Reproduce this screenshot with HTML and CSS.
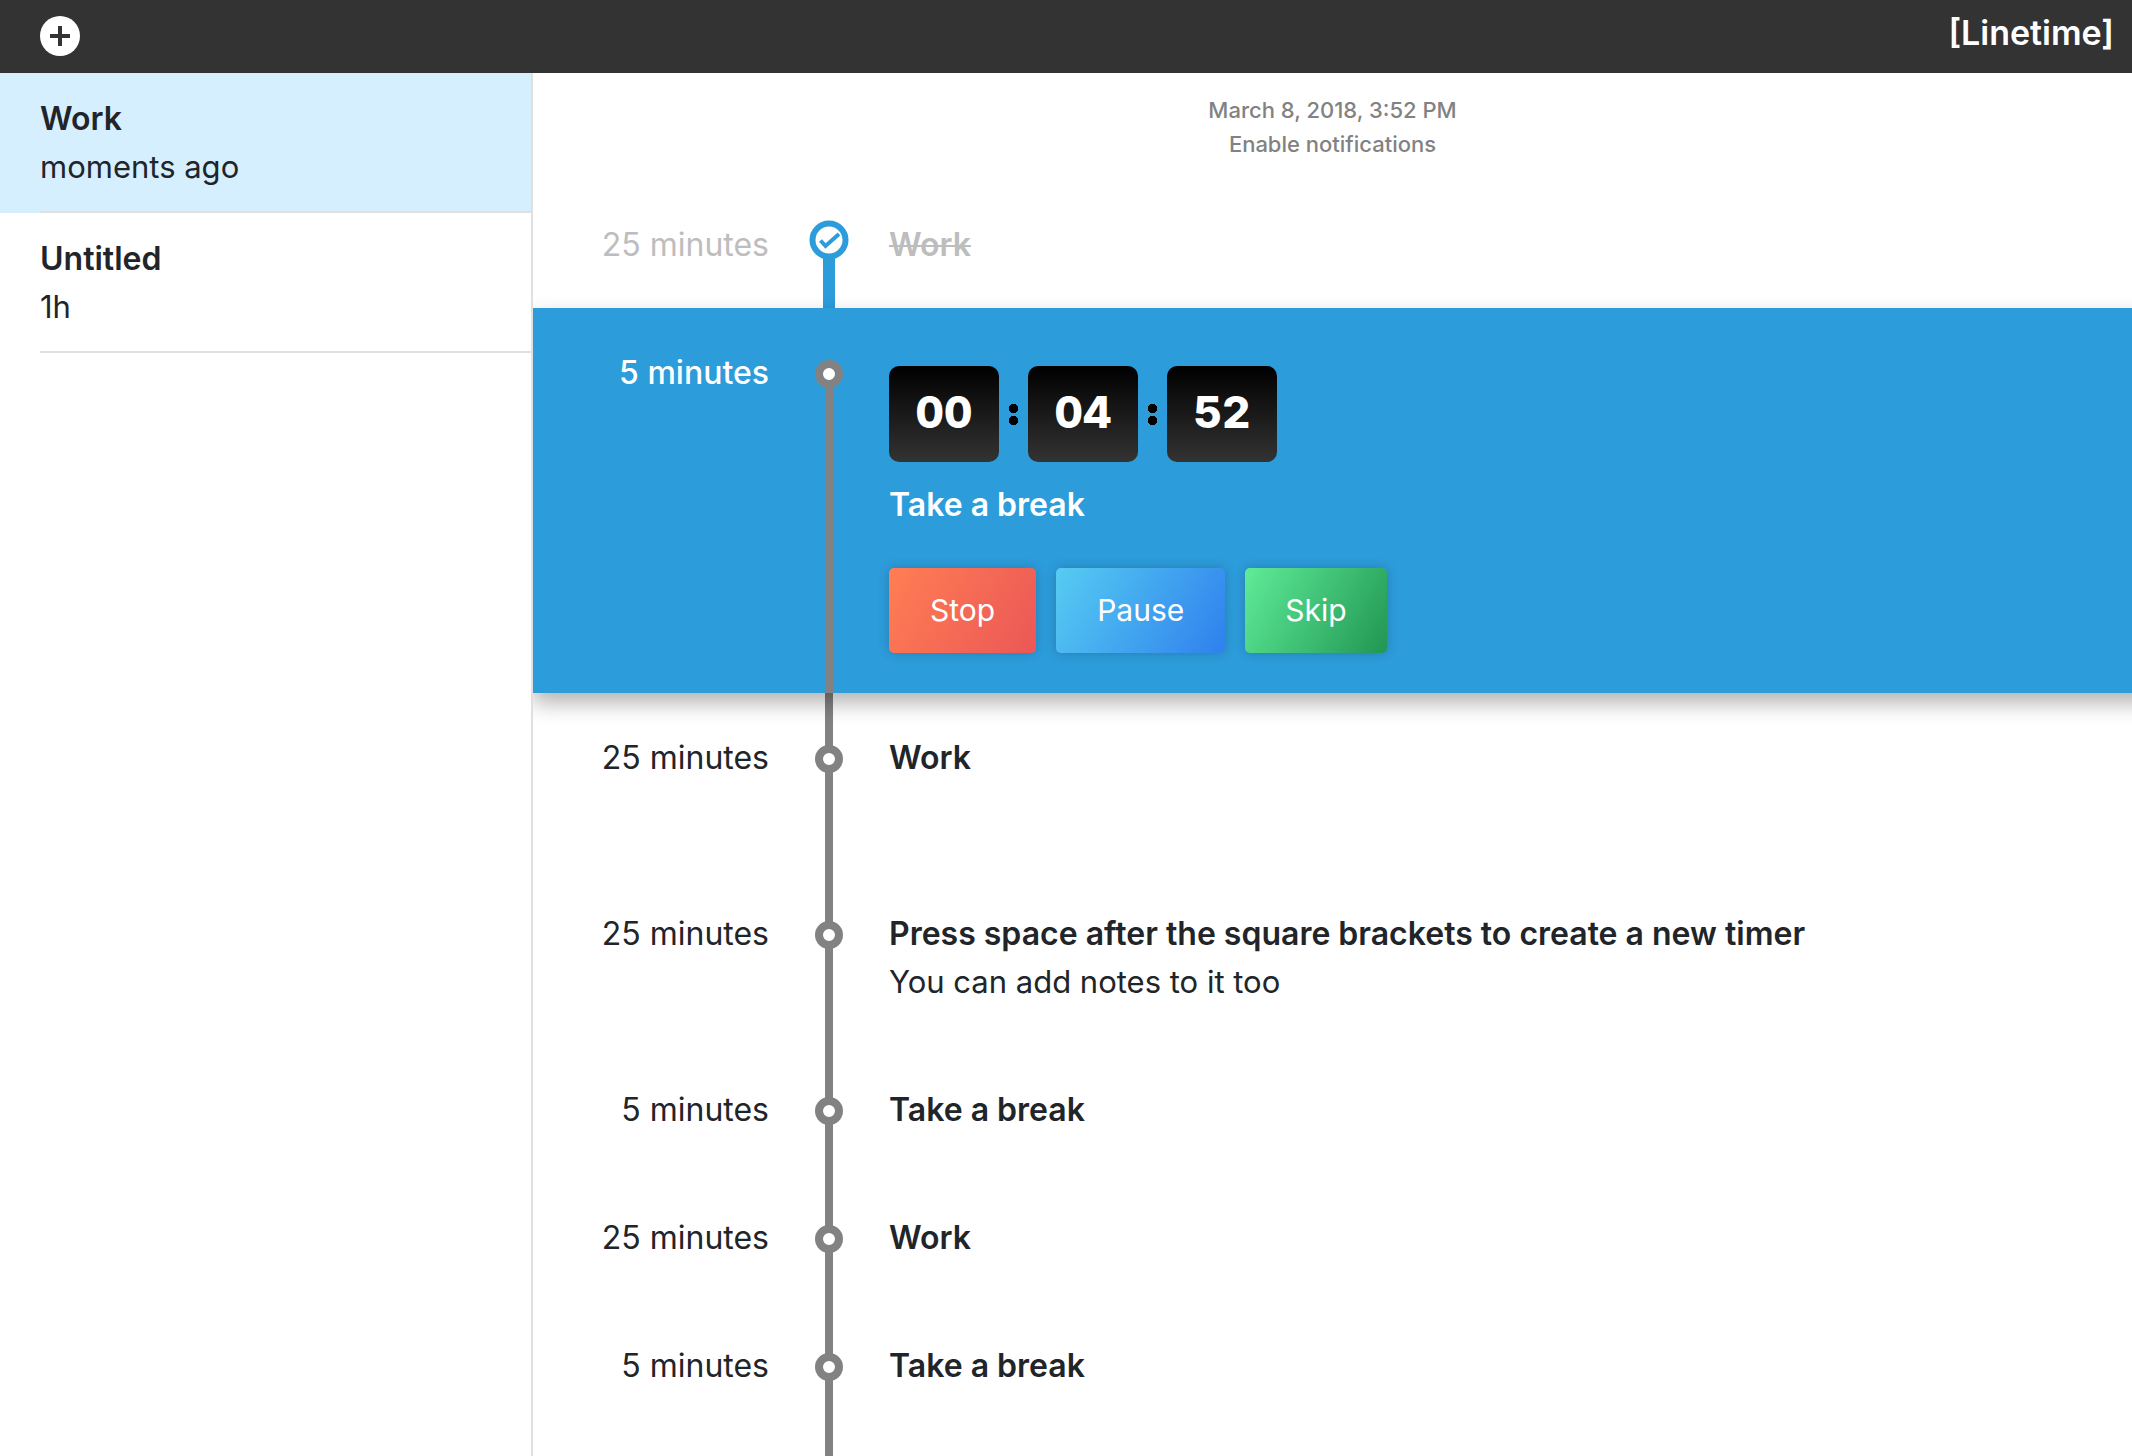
FILE: index.html
```html
<!DOCTYPE html>
<html lang="en">
<head>
<meta charset="utf-8">
<meta name="viewport" content="width=device-width, initial-scale=1">
<title>Linetime</title>
<link rel="stylesheet" href="styles.css">
</head>
<body>
<header class="topbar">
  <button class="add" type="button" aria-label="New timeline">
    <svg width="40" height="40" viewBox="0 0 40 40" aria-hidden="true"><circle cx="20" cy="20" r="20" fill="#fff"/><path d="M20 10v20M10 20h20" stroke="#333" stroke-width="4" fill="none"/></svg>
  </button>
  <a class="logo" href="#">[Linetime]</a>
</header>
<div class="layout">
  <nav class="sidebar" aria-label="Timelines">
    <a class="entry selected" href="#"><span class="entry-body"><strong>Work</strong><span class="note">moments ago</span></span></a>
    <a class="entry" href="#"><span class="entry-body"><strong>Untitled</strong><span class="note">1h</span></span></a>
  </nav>
  <main class="main">
    <div class="meta">
      <time datetime="2018-03-08T15:52">March 8, 2018, 3:52 PM</time>
      <button class="notify" type="button">Enable notifications</button>
    </div>
    <ol class="timeline">
      <li class="row done">
        <span class="duration">25 minutes</span>
        <span class="marker">
          <svg class="check" width="40" height="40" viewBox="0 0 40 40" aria-hidden="true"><circle cx="20" cy="20" r="16.5" fill="#fff" stroke="#2d9cdb" stroke-width="6"/><path d="M11.500 20.500l5 5.500L30 14" fill="none" stroke="#2d9cdb" stroke-width="4"/></svg>
        </span>
        <div class="content"><s class="title">Work</s></div>
      </li>
      <li class="row active">
        <span class="duration">5 minutes</span>
        <span class="marker"><span class="dot"></span></span>
        <div class="content">
          <div class="clock" role="timer">
            <span class="digits">00</span><span class="colon"></span><span class="digits">04</span><span class="colon"></span><span class="digits">52</span>
          </div>
          <strong class="title">Take a break</strong>
          <div class="actions">
            <button class="btn stop" type="button">Stop</button>
            <button class="btn pause" type="button">Pause</button>
            <button class="btn skip" type="button">Skip</button>
          </div>
        </div>
      </li>
      <li class="row noted">
        <span class="duration">25 minutes</span>
        <span class="marker"><span class="dot"></span></span>
        <div class="content"><strong class="title">Work</strong></div>
      </li>
      <li class="row noted">
        <span class="duration">25 minutes</span>
        <span class="marker"><span class="dot"></span></span>
        <div class="content"><strong class="title">Press space after the square brackets to create a new timer</strong><span class="note">You can add notes to it too</span></div>
      </li>
      <li class="row">
        <span class="duration">5 minutes</span>
        <span class="marker"><span class="dot"></span></span>
        <div class="content"><strong class="title">Take a break</strong></div>
      </li>
      <li class="row">
        <span class="duration">25 minutes</span>
        <span class="marker"><span class="dot"></span></span>
        <div class="content"><strong class="title">Work</strong></div>
      </li>
      <li class="row">
        <span class="duration">5 minutes</span>
        <span class="marker"><span class="dot"></span></span>
        <div class="content"><strong class="title">Take a break</strong></div>
      </li>
      <li class="row tail" aria-hidden="true"><span></span><span class="marker"></span></li>
    </ol>
  </main>
</div>
</body>
</html>
```
FILE: styles.css
```css
* { box-sizing: border-box; }

body {
  margin: 0;
  min-height: 100vh;
  display: flex;
  flex-direction: column;
  background: #fff;
  color: #212529;
  font: 400 32px/48px Inter, "Liberation Sans", sans-serif;
}

button { font: inherit; border: 0; padding: 0; background: none; cursor: pointer; }
a { color: inherit; text-decoration: none; }

.topbar {
  display: flex;
  justify-content: space-between;
  align-items: flex-start;
  padding: 16px 18px 17px 40px;
  background: #333;
  color: #fff;
}
.add, .add svg { display: block; }
.logo { font-size: 34px; font-weight: 600; line-height: 34px; }

.layout { flex: 1; display: grid; grid-template-columns: 25% minmax(0, 1fr); }

.sidebar { border-right: 2px solid #e0e0e0; }
.entry { display: block; padding-left: 40px; }
.selected { background: #d6efff; }
.entry-body {
  display: flex;
  flex-direction: column;
  padding: 22px 0 20px;
  border-bottom: 2px solid #e0e0e0;
}
strong { font-weight: 600; }
.note { font-size: 31px; }

.main { display: flex; flex-direction: column; overflow: hidden; }
.meta {
  display: flex;
  flex-direction: column;
  align-items: center;
  padding: 20px 0 19px;
  color: #828282;
  font-size: 22px;
  font-weight: 500;
  line-height: 34px;
}
.notify { color: inherit; }

.timeline {
  flex: 1;
  display: flex;
  flex-direction: column;
  margin: 0;
  padding: 0;
  list-style: none;
}
.row {
  display: grid;
  grid-template-columns: 236px 40px minmax(0, 1fr);
  column-gap: 40px;
  min-height: 128px;
}
.noted { min-height: 176px; }
.tail { flex: 1; min-height: 0; }
.duration { padding: 41px 0 39px; text-align: right; }
.content { display: flex; flex-direction: column; align-items: flex-start; padding: 41px 0 39px; }

.marker {
  display: flex;
  justify-content: center;
  align-items: flex-start;
  padding-top: 52px;
  background: linear-gradient(#828282, #828282) center / 8px 100% no-repeat;
}
.dot { width: 28px; height: 28px; border: 8px solid #828282; border-radius: 50%; background: #fff; }

.done { color: #bdbdbd; }
.done .title { font-weight: 600; text-decoration-thickness: 2px; }
.done .marker {
  padding-top: 40px;
  background: linear-gradient(#2d9cdb, #2d9cdb) bottom / 12px 60px no-repeat;
}
.check { display: block; }

/* Runs past the right edge so its shadow does not fade there. */
.active {
  position: relative;
  margin-right: -24px;
  background: #2d9cdb;
  color: #fff;
  box-shadow: 0 10px 20px rgba(0, 0, 0, .3);
}
.active .duration { font-weight: 500; }
.active .content { padding-bottom: 40px; }
.active .marker { background-size: 8px calc(100% - 60px); background-position: bottom; }

.clock { display: flex; align-items: center; gap: 9px; margin: 17px 0 19px; }
.digits {
  width: 110px;
  padding: 22px 0 26px;
  border-radius: 10px;
  background: linear-gradient(#000, #333);
  text-align: center;
  font-size: 44px;
  font-weight: 800;
  font-variant-numeric: tabular-nums;
}
.colon {
  width: 11px;
  height: 23px;
  background:
    radial-gradient(circle 5px, #000 96%, transparent) top / 11px 11px no-repeat,
    radial-gradient(circle 5px, #000 96%, transparent) bottom / 11px 11px no-repeat;
}
.actions { display: flex; gap: 20px; margin-top: 39px; }
.btn {
  padding: 18px 41px 19px;
  border-radius: 5px;
  color: #fff;
  font-size: 30px;
  box-shadow: 0 0 12px rgba(0, 0, 0, .2);
}
.stop { background: linear-gradient(120deg, #ff7e53, #eb5757); }
.pause { background: linear-gradient(120deg, #56ccf2, #2f80ed); }
.skip { padding: 18px 40px 19px; background: linear-gradient(120deg, #5fec98, #219653); }
```
